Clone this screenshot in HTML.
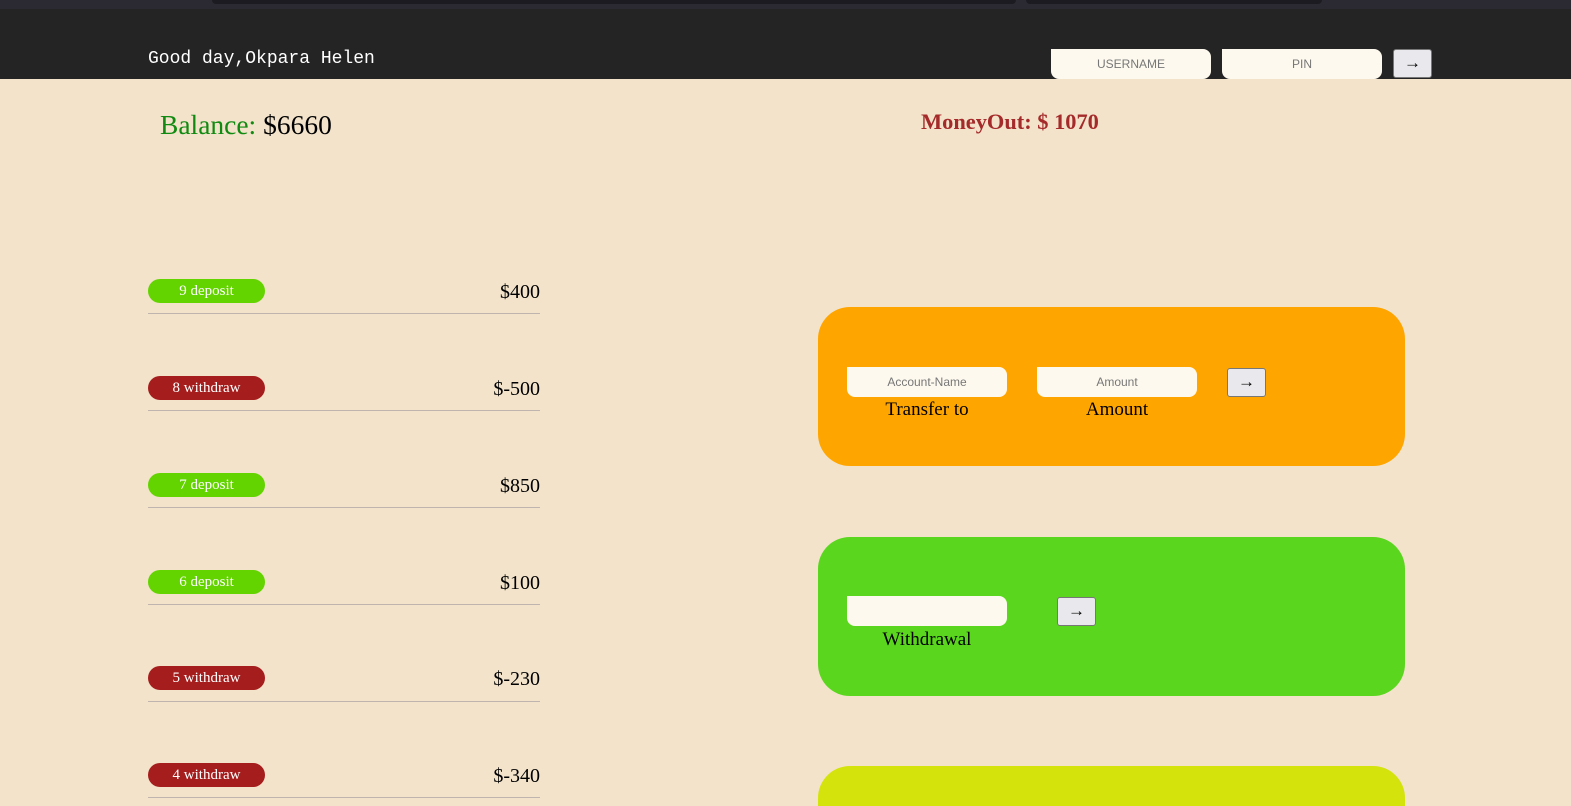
<!DOCTYPE html>
<html style="overflow:hidden;height:806px"><head><style>
body{margin:0;width:1571px;height:806px;overflow:hidden;background:#f2e3ca;font-family:"Liberation Serif",serif;position:relative}
.a{position:absolute}
.top{left:0;top:0;width:1571px;height:9px;background:#2b2a33}
.hdr{left:0;top:9px;width:1571px;height:70px;background:#242424}
.inp{position:absolute;background:#fdf9ee;border-radius:0 8px 8px 8px;font-family:"Liberation Sans",sans-serif;font-size:12px;color:#777;text-align:center;line-height:30px;height:30px;width:160px}
.btn{position:absolute;background:#e9e9ed;border:1px solid #777;border-radius:3px;width:37px;height:27px;text-align:center;line-height:26px;font-size:17px;color:#000}
.pill{position:absolute;left:148px;width:117px;height:24px;border-radius:12px;color:#fff;text-align:center;font-size:15px;line-height:24px}
.amt{position:absolute;right:1031px;font-size:20px}
.line{position:absolute;left:148px;width:392px;height:1px;background:#bfb4ae}
.card{position:absolute;left:818px;width:587px;height:159px;border-radius:32px}
.lbl{position:absolute;font-size:19px;text-align:center;width:160px}
</style></head><body>
<div class="a top"><div class="a" style="left:212px;top:0;width:804px;height:4px;background:#1c1b22;border-radius:0 0 4px 4px"></div><div class="a" style="left:1026px;top:0;width:296px;height:4px;background:#1c1b22;border-radius:0 0 4px 4px"></div></div>
<div class="a hdr"></div>
<div class="a" style="left:148px;top:49px;color:#fff;font-family:'Liberation Mono',monospace;font-size:18px">Good day,Okpara Helen</div>
<div class="inp" style="left:1051px;top:49px;height:30px">USERNAME</div>
<div class="inp" style="left:1222px;top:49px;height:30px">PIN</div>
<div class="btn" style="left:1393px;top:49px">→</div>
<div class="a" style="left:160px;top:109px;font-size:27.5px"><span style="color:#108a10">Balance:</span> $6660</div>
<div class="a" style="left:921px;top:109px;font-size:22.4px;font-weight:bold;color:#a52a2a">MoneyOut: $ 1070</div>

<div class="pill" style="top:279px;background:#63d400">9 deposit</div><div class="amt" style="top:281px">$400</div><div class="line" style="top:313px"></div>
<div class="pill" style="top:376px;background:#a51d1d">8 withdraw</div><div class="amt" style="top:378px">$-500</div><div class="line" style="top:410px"></div>
<div class="pill" style="top:473px;background:#63d400">7 deposit</div><div class="amt" style="top:475px">$850</div><div class="line" style="top:507px"></div>
<div class="pill" style="top:570px;background:#63d400">6 deposit</div><div class="amt" style="top:572px">$100</div><div class="line" style="top:604px"></div>
<div class="pill" style="top:666px;background:#a51d1d">5 withdraw</div><div class="amt" style="top:668px">$-230</div><div class="line" style="top:701px"></div>
<div class="pill" style="top:763px;background:#a51d1d">4 withdraw</div><div class="amt" style="top:765px">$-340</div><div class="line" style="top:797px"></div>

<div class="card" style="top:307px;background:#ffa500"></div>
<div class="inp" style="left:847px;top:367px">Account-Name</div>
<div class="inp" style="left:1037px;top:367px">Amount</div>
<div class="btn" style="left:1227px;top:368px">→</div>
<div class="lbl" style="left:847px;top:399px">Transfer to</div>
<div class="lbl" style="left:1037px;top:399px">Amount</div>

<div class="card" style="top:537px;background:#5bd61f"></div>
<div class="inp" style="left:847px;top:596px"></div>
<div class="btn" style="left:1057px;top:597px">→</div>
<div class="lbl" style="left:847px;top:629px">Withdrawal</div>

<div class="card" style="top:766px;height:40px;border-radius:32px 32px 0 0;background:#d4e30c"></div>
</body></html>
